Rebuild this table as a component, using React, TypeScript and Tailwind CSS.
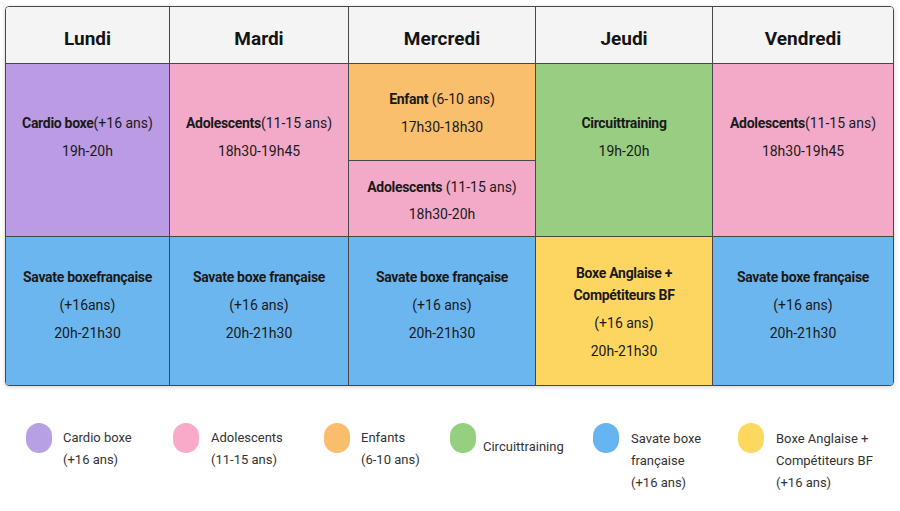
import type { ReactNode } from 'react'

type Session = {
  title: ReactNode
  lines: string[]
  bg: string
  pad: string
}

const days = ['Lundi', 'Mardi', 'Mercredi', 'Jeudi', 'Vendredi']

const savate = (title: string, age: string): Session => ({
  title: <b className="font-bold tracking-[-0.3px]">{title}</b>,
  lines: [age, '20h-21h30'],
  bg: 'bg-[#6cb6ef]',
  pad: 'pt-[26px]',
})

const ado = (spaced: boolean): Session => ({
  title: (
    <>
      <b className="font-bold tracking-[-0.3px]">Adolescents</b>
      {spaced ? ' (11-15 ans)' : '(11-15 ans)'}
    </>
  ),
  lines: [],
  bg: 'bg-[#f3aac9]',
  pad: '',
})

const legend = [
  { color: 'bg-[#b8a0e4]', lines: ['Cardio boxe', '(+16 ans)'], w: 'w-[147px]', gap: 'gap-[11px]', pt: 'pt-[4px]' },
  { color: 'bg-[#f9aac9]', lines: ['Adolescents', '(11-15 ans)'], w: 'w-[151px]', gap: 'gap-[12px]', pt: 'pt-[4px]' },
  { color: 'bg-[#f9bd6c]', lines: ['Enfants', '(6-10 ans)'], w: 'w-[126px]', gap: 'gap-[11px]', pt: 'pt-[4px]' },
  { color: 'bg-[#95cf80]', lines: ['Circuittraining'], w: 'w-[143px]', gap: 'gap-[7px]', pt: 'pt-[13px]' },
  { color: 'bg-[#66b5f0]', lines: ['Savate boxe', 'française', '(+16 ans)'], w: 'w-[145px]', gap: 'gap-[12px]', pt: 'pt-[5px]' },
  { color: 'bg-[#fdd85f]', lines: ['Boxe Anglaise +', 'Compétiteurs BF', '(+16 ans)'], w: 'w-[150px]', gap: 'gap-[12px]', pt: 'pt-[5px]' },
]

function Cell({ s, last }: { s: Session; last?: boolean }) {
  return (
    <div
      className={`flex flex-col items-center text-center text-[14px] leading-[28px] text-[#1a1a1a] ${s.bg} ${s.pad} ${
        last ? '' : 'border-r border-[#474747]'
      }`}
    >
      <div>{s.title}</div>
      {s.lines.map((l) => (
        <div key={l}>{l}</div>
      ))}
    </div>
  )
}

export default function App() {
  const row1: Session[] = [
    {
      title: (
        <>
          <b className="font-bold tracking-[-0.3px]">Cardio boxe</b>(+16 ans)
        </>
      ),
      lines: ['19h-20h'],
      bg: 'bg-[#bb9be3]',
      pad: 'pt-[45px]',
    },
    { ...ado(false), lines: ['18h30-19h45'], pad: 'pt-[45px]' },
  ]

  const row2: Session[] = [
    savate('Savate boxefrançaise', '(+16ans)'),
    savate('Savate boxe française', '(+16 ans)'),
    savate('Savate boxe française', '(+16 ans)'),
  ]

  return (
    <div className="min-h-screen bg-white font-[Roboto,'Noto_Sans',sans-serif]">
      {/* Planning */}
      <div className="ml-[5px] pt-[6px]">
        <div className="w-[889px] overflow-hidden rounded-[4px] border border-[#474747] shadow-[0_1px_4px_rgba(0,0,0,0.18)]">
          <div className="grid grid-cols-[164px_179px_187px_177px_180px] grid-rows-[57px_173px_148px]">
            {days.map((d, i) => (
              <div
                key={d}
                className={`flex items-center justify-center bg-[#f4f4f4] pt-[8px] text-[19px] font-bold text-[#141414] border-b border-[#474747] ${
                  i < 4 ? 'border-r' : ''
                }`}
              >
                {d}
              </div>
            ))}

            {/* ligne 1 */}
            {row1.map((s, i) => (
              <div key={i} className="flex flex-col border-b border-[#474747] [&>div]:flex-1">
                <Cell s={s} />
              </div>
            ))}
            <div className="flex flex-col border-r border-b border-[#474747]">
              <div className="flex h-[97px] flex-col items-center border-b border-[#474747] bg-[#f9bf6d] pt-[21px] text-center text-[14px] leading-[28px] text-[#1a1a1a]">
                <div>
                  <b className="font-bold tracking-[-0.3px]">Enfant</b> (6-10 ans)
                </div>
                <div>17h30-18h30</div>
              </div>
              <div className="flex flex-1 flex-col items-center bg-[#f3aac9] pt-[13px] text-center text-[14px] leading-[27px] text-[#1a1a1a]">
                <div>
                  <b className="font-bold tracking-[-0.3px]">Adolescents</b> (11-15 ans)
                </div>
                <div>18h30-20h</div>
              </div>
            </div>
            <div className="flex flex-col border-b border-[#474747] [&>div]:flex-1">
              <Cell
                s={{
                  title: <b className="font-bold tracking-[-0.3px]">Circuittraining</b>,
                  lines: ['19h-20h'],
                  bg: 'bg-[#99cd82]',
                  pad: 'pt-[45px]',
                }}
              />
            </div>
            <div className="flex flex-col border-b border-[#474747] [&>div]:flex-1">
              <Cell s={{ ...ado(false), lines: ['18h30-19h45'], pad: 'pt-[45px]' }} last />
            </div>

            {/* ligne 2 */}
            {row2.map((s, i) => (
              <Cell key={i} s={s} />
            ))}
            <div className="flex flex-col items-center border-r border-[#474747] bg-[#fdd662] pt-[25px] text-center text-[14px] text-[#1a1a1a]">
              <div className="font-bold leading-[22px] tracking-[-0.3px]">
                Boxe Anglaise +<br />
                Compétiteurs BF
              </div>
              <div className="mt-[3px] leading-[28px]">(+16 ans)</div>
              <div className="leading-[28px]">20h-21h30</div>
            </div>
            <Cell s={savate('Savate boxe française', '(+16 ans)')} last />
          </div>
        </div>
      </div>

      {/* Légende */}
      <div className="mt-[37px] flex pl-[26px]">
        {legend.map((item) => (
          <div key={item.lines[0]} className={`flex items-start ${item.w} ${item.gap}`}>
            <span className={`block h-[30px] w-[26px] shrink-0 rounded-full ${item.color}`} />
            <div className={`text-[13px] leading-[22px] text-[#333333] ${item.pt}`}>
              {item.lines.map((l) => (
                <div key={l}>{l}</div>
              ))}
            </div>
          </div>
        ))}
      </div>
    </div>
  )
}
